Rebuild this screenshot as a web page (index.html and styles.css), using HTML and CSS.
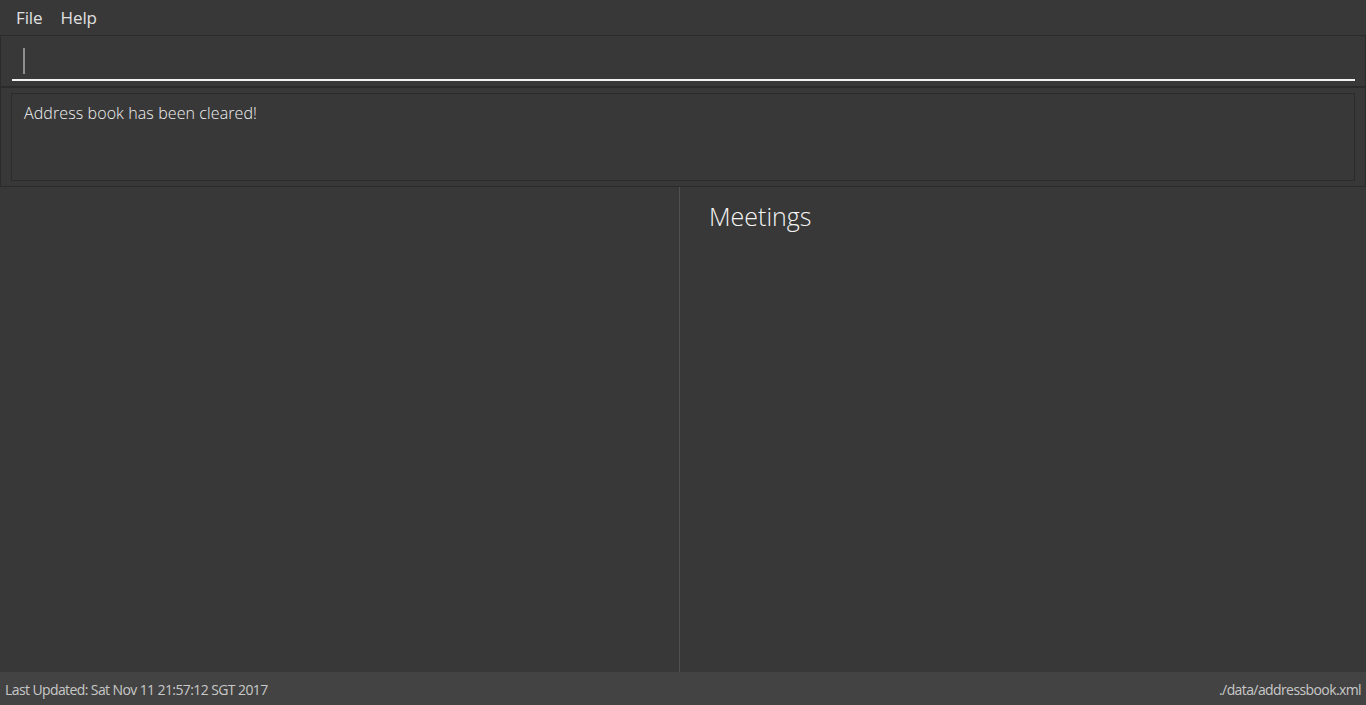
FILE: index.html
```html
<!DOCTYPE html>
<html>
<head>
<meta charset="utf-8">
<link rel="stylesheet" href="styles.css">
</head>
<body>
<div class="app">
  <div class="menubar">
    <span class="menu-item">File</span>
    <span class="menu-item">Help</span>
  </div>
  <div class="command-section">
    <div class="command-box"><span class="caret"></span></div>
  </div>
  <div class="result-section">
    <div class="result-box">Address book has been cleared!</div>
  </div>
  <div class="main">
    <div class="left-pane"></div>
    <div class="right-pane">
      <div class="heading">Meetings</div>
    </div>
  </div>
  <div class="statusbar">
    <span>Last Updated: Sat Nov 11 21:57:12 SGT 2017</span>
    <span>./data/addressbook.xml</span>
  </div>
</div>
</body>
</html>
```
FILE: styles.css
```css
html, body {
  margin: 0;
  padding: 0;
  background: #383838;
}
.app {
  width: 1366px;
  height: 705px;
  display: flex;
  flex-direction: column;
  font-family: "Open Sans", "Noto Sans", sans-serif;
  font-weight: 300;
  color: #e8e8e8;
  box-sizing: border-box;
}
.menubar {
  height: 35px;
  display: flex;
  align-items: center;
  padding-left: 16px;
  gap: 18px;
  box-sizing: border-box;
}
.menu-item {
  font-size: 17px;
  font-weight: 400;
  color: #e0e0e0;
  letter-spacing: -0.1px;
}
.command-section {
  height: 52px;
  border: 1px solid #2b2b2b;
  box-sizing: border-box;
  padding: 0 10px 0 11px;
}
.command-box {
  height: 45px;
  border-bottom: 2px solid #f2f2f2;
  box-sizing: border-box;
  padding: 12px 0 0 11px;
}
.caret {
  display: block;
  width: 2px;
  height: 26px;
  background: #8f8f8f;
}
.result-section {
  height: 100px;
  border: 1px solid #2b2b2b;
  box-sizing: border-box;
  padding: 5px 10px 5px 10px;
}
.result-box {
  height: 88px;
  border: 1px solid #2b2b2b;
  box-sizing: border-box;
  padding: 8px 12px;
  font-size: 16px;
  color: #f0f0f0;
  letter-spacing: 0.1px;
}
.main {
  flex: 1;
  display: flex;
}
.left-pane {
  width: 679px;
  border-right: 1px solid #505050;
}
.right-pane {
  flex: 1;
  padding: 12px 0 0 29px;
}
.heading {
  font-size: 25px;
  color: #f4f4f4;
  letter-spacing: 0;
}
.statusbar {
  height: 33px;
  background: #434343;
  display: flex;
  justify-content: space-between;
  align-items: center;
  padding: 2px 5px 0 5px;
  font-size: 14px;
  font-weight: 400;
  color: #c8c8c8;
  letter-spacing: -0.6px;
  box-sizing: border-box;
}
```
